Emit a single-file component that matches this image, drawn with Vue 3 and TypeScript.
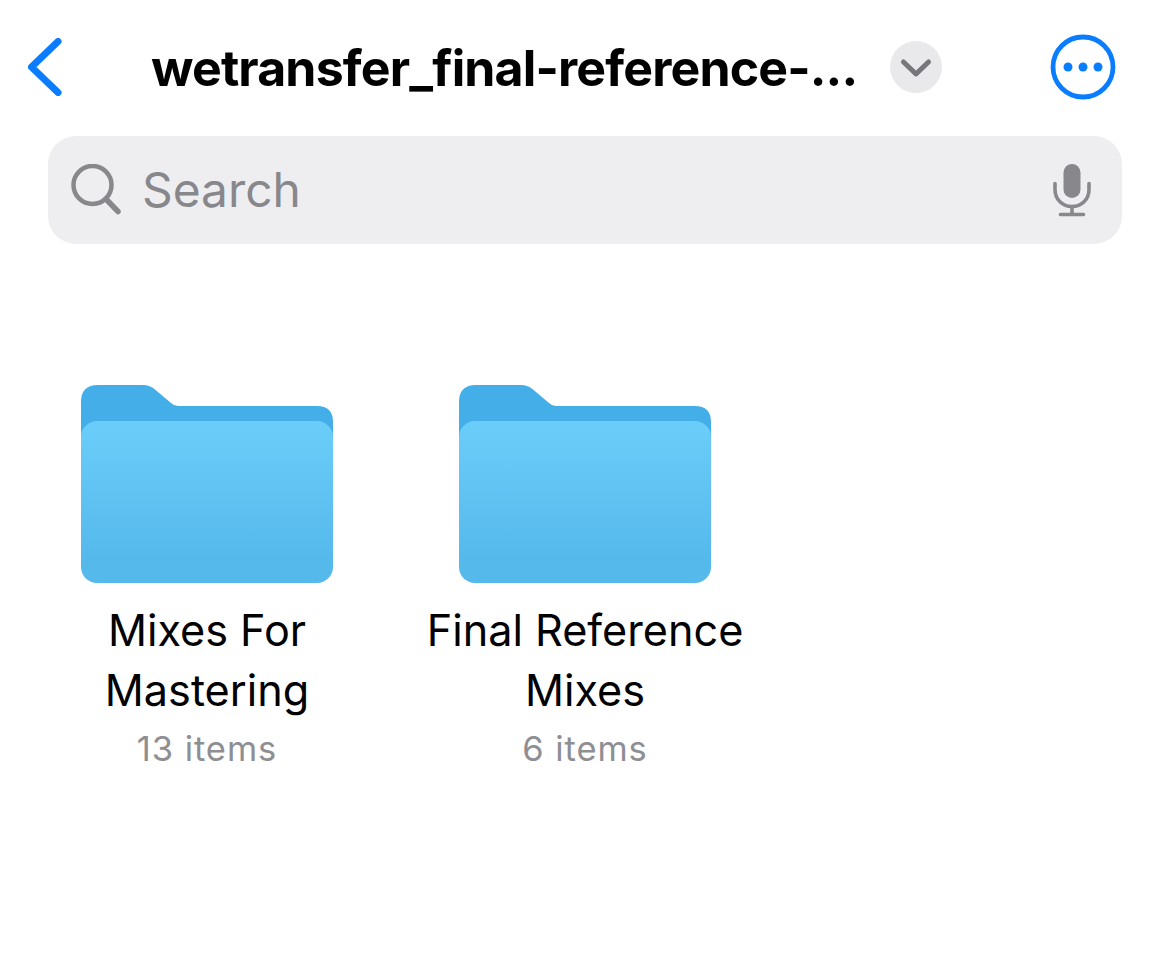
<script setup lang="ts">
interface Folder { name: string[]; meta: string }
const folders: Folder[] = [
  { name: ['Mixes For', 'Mastering'], meta: '13 items' },
  { name: ['Final Reference', 'Mixes'], meta: '6 items' },
]
</script>

<template>
  <div class="page">
    <header class="nav">
      <svg class="back" viewBox="0 0 34 58" fill="none">
        <path d="M30 3.500 3.500 29 30 54.500" stroke="#0a7cff" stroke-width="7" stroke-linecap="round" stroke-linejoin="round" />
      </svg>
      <h1 class="title">wetransfer_final-reference-...</h1>
      <span class="chev">
        <svg viewBox="0 0 52 52" fill="none" width="52" height="52">
          <path d="M13.500 21 26 33l12.500-12" stroke="#77777b" stroke-width="5" stroke-linecap="round" stroke-linejoin="round" />
        </svg>
      </span>
      <svg class="more" viewBox="0 0 66 66" fill="none">
        <circle cx="33" cy="33" r="30" stroke="#0a7cff" stroke-width="4.800" />
        <circle cx="18" cy="33" r="4.500" fill="#0a7cff" />
        <circle cx="33" cy="33" r="4.500" fill="#0a7cff" />
        <circle cx="48" cy="33" r="4.500" fill="#0a7cff" />
      </svg>
    </header>

    <div class="search">
      <svg class="glass" viewBox="0 0 50 52" fill="none">
        <circle cx="21.500" cy="21" r="19" stroke="#88888c" stroke-width="4.500" />
        <path d="M35 35 47 47.500" stroke="#88888c" stroke-width="5.500" stroke-linecap="round" />
      </svg>
      <span class="placeholder">Search</span>
      <svg class="mic" viewBox="0 0 38 54" fill="none">
        <rect x="10.500" y="1" width="17" height="34" rx="8.500" fill="#88888c" />
        <path d="M2 20.500v6c0 10 7.500 17 17 17s17-7 17-17v-6" stroke="#88888c" stroke-width="3.600" stroke-linecap="round" />
        <path d="M19 43.500v8" stroke="#88888c" stroke-width="3.600" />
        <path d="M7.500 51.500h23" stroke="#88888c" stroke-width="3.600" stroke-linecap="round" />
      </svg>
    </div>

    <section class="grid">
      <article v-for="(f, i) in folders" :key="i" class="item">
        <svg class="folder" viewBox="0 0 252 198">
          <defs>
            <linearGradient :id="`front-${i}`" x1="0" y1="0" x2="0" y2="1">
              <stop offset="0.05" stop-color="#6accf8" />
              <stop offset="0.85" stop-color="#56b9ec" />
            </linearGradient>
          </defs>
          <path d="M0 60V17Q0 0 17 0H62Q69 0 74 4.500L90 18Q93 21 97 21H236Q252 21 252 37V60Z" fill="#43aee8" />
          <rect y="36" width="252" height="162" rx="16" :fill="`url(#front-${i})`" />
        </svg>
        <div class="name">
          <div v-for="line in f.name" :key="line">{{ line }}</div>
        </div>
        <div class="meta">{{ f.meta }}</div>
      </article>
    </section>
  </div>
</template>

<style>
html, body { margin: 0; background: #fff; }
</style>

<style scoped>
.page {
  width: 1169px;
  height: 961px;
  overflow: hidden;
  background: #fff;
  font-family: Inter, "Liberation Sans", sans-serif;
  color: #000;
}
.nav {
  display: flex;
  align-items: center;
  height: 66px;
  padding: 34px 53px 0 28px;
}
.back { width: 34px; height: 58px; flex: none; }
.title {
  margin: 1px 0 0 89px;
  width: 739px;
  flex: none;
  font-size: 50px;
  letter-spacing: -0.85px;
  line-height: 66px;
  font-weight: 650;
  white-space: nowrap;
}
.chev {
  width: 52px;
  height: 52px;
  flex: none;
  border-radius: 50%;
  background: #e9e9eb;
}
.chev svg { display: block; }
.more { width: 66px; height: 66px; flex: none; margin-left: 108px; }
.search {
  display: flex;
  align-items: center;
  height: 108px;
  margin: 36px 47px 0 48px;
  padding: 0 31px 0 23px;
  border-radius: 28px;
  background: #eeeef0;
  box-sizing: border-box;
}
.glass { width: 50px; height: 52px; flex: none; }
.placeholder {
  margin-left: 21px;
  flex: 1;
  font-size: 47.900px;
  color: #88888c;
}
.mic { width: 38px; height: 54px; flex: none; }
.grid {
  display: grid;
  grid-template-columns: repeat(3, 378px);
  margin-top: 141px;
  padding-left: 18px;
}
.item { display: flex; flex-direction: column; align-items: center; text-align: center; }
.folder { width: 252px; height: 198px; display: block; }
.name { margin-top: 17px; font-size: 43.200px; line-height: 60px; }
.meta { margin-top: 9px; font-size: 34.500px; letter-spacing: 0.95px; line-height: 40px; color: #8e8e93; }
</style>
